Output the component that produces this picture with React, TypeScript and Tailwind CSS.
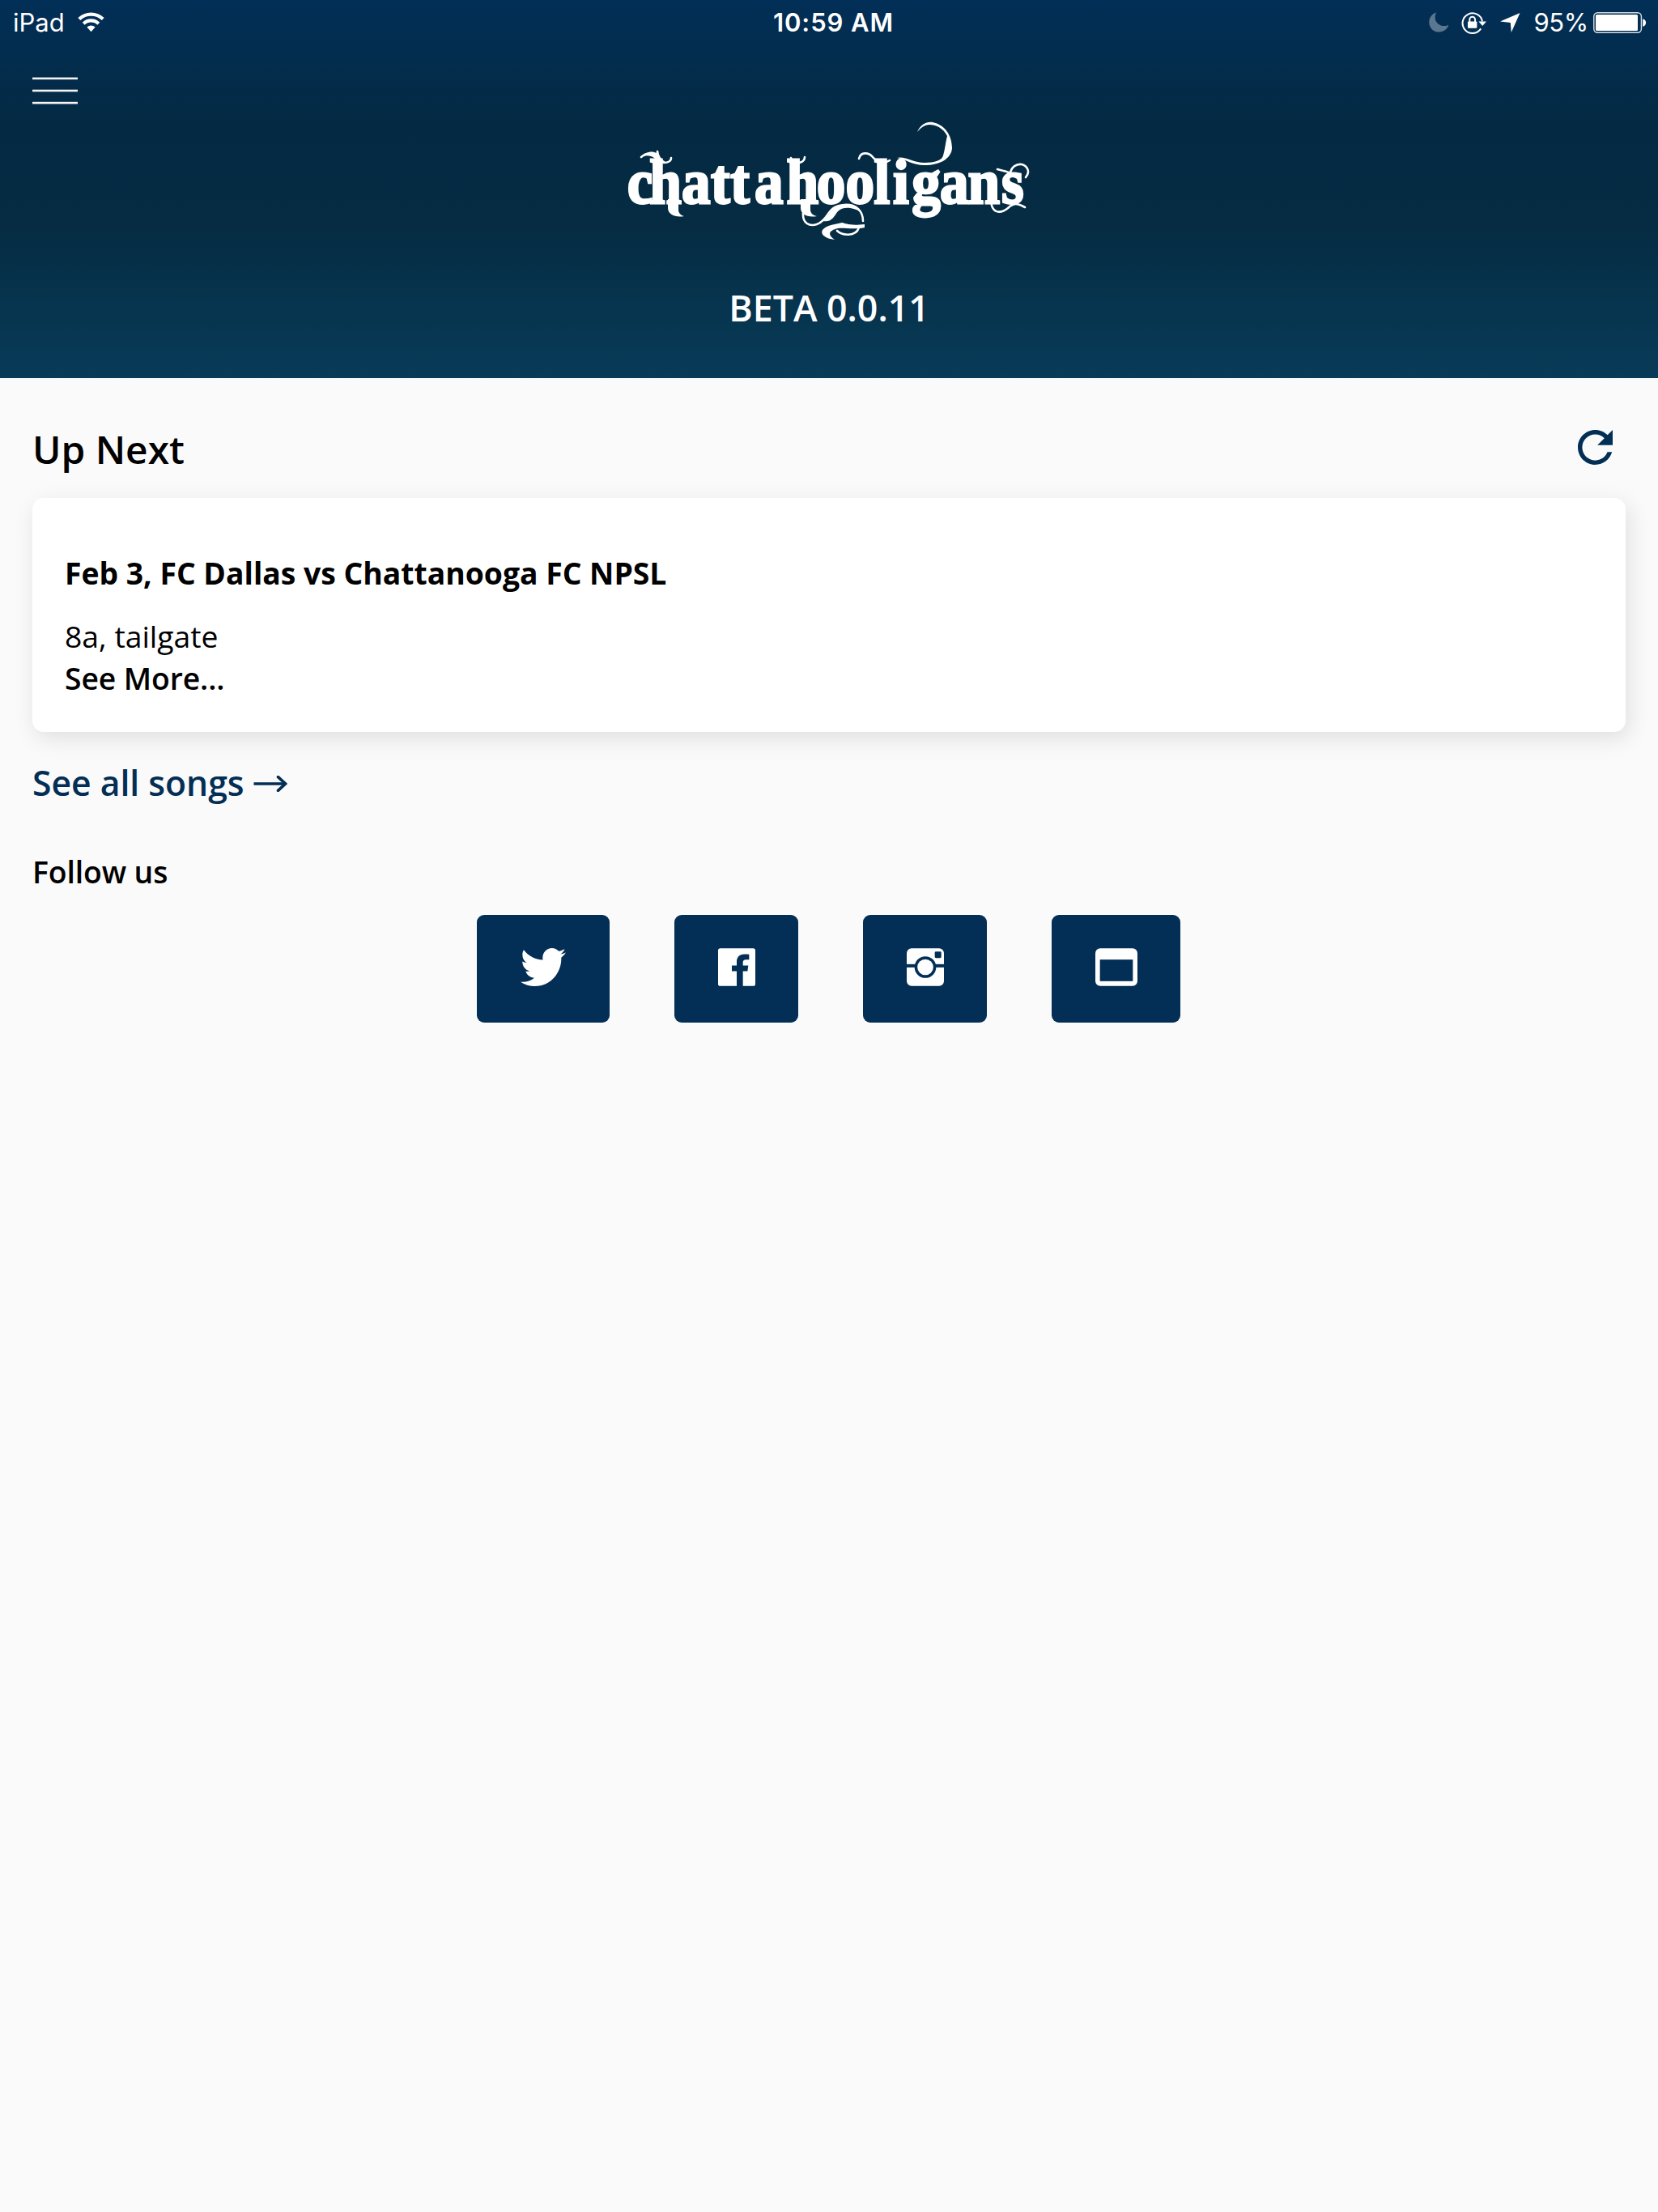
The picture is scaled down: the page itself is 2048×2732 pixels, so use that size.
import React from "react";

function WifiIcon() {
  return (
    <svg className="h-[25px] w-[33px]" viewBox="0 0 33 25" fill="none" stroke="#fff" strokeWidth="4.2">
      <path d="M1.8 8.6C10 0.6 23 0.6 31.2 8.6" />
      <path d="M7.2 14.2C12.4 9.2 20.6 9.2 25.8 14.2" />
      <path d="M11.4 18.6C14.4 15.8 18.6 15.8 21.6 18.6L16.5 24.2Z" fill="#fff" stroke="none" />
    </svg>
  );
}

function MoonIcon() {
  return (
    <svg className="h-[25px] w-[25px]" viewBox="0 0 25 25" fill="#fff" fillOpacity="0.35">
      <path d="M9.5 0.2C4 1.8 0.3 6.6 0.3 12.4C0.3 19.2 5.6 24.6 12.4 24.6C18 24.6 22.8 21 24.4 15.8C22.6 16.8 20.6 17.2 18.6 17.1C12.2 16.8 7.6 11.8 7.6 6.4C7.6 4 8.2 1.9 9.5 0.2Z" />
    </svg>
  );
}

function RotationLockIcon() {
  return (
    <svg className="h-[28px] w-[32px]" viewBox="0 0 32 28" fill="none" stroke="#fff" strokeWidth="2">
      <path d="M24.2 21.4A12.3 12.3 0 1 1 26 12.5" />
      <path d="M21.4 12.5H31L26.2 18Z" fill="#fff" stroke="none" />
      <rect x="8" y="12.6" width="11.4" height="8.2" rx="1" fill="#fff" stroke="none" />
      <path d="M10.3 13V10.2A3.4 3.4 0 0 1 17.1 10.2V13" />
    </svg>
  );
}

function LocationIcon() {
  return (
    <svg className="h-[24px] w-[25px]" viewBox="0 0 25 24" fill="#fff">
      <path d="M24.5 0L13.8 24L12.8 12L0 10.6Z" />
    </svg>
  );
}

function BatteryIcon() {
  return (
    <svg className="h-[26px] w-[66px]" viewBox="0 0 66 26">
      <rect x="0.8" y="0.8" width="58.6" height="24.4" rx="4.5" fill="none" stroke="#fff" strokeOpacity="0.85" strokeWidth="1.4" />
      <rect x="3" y="3" width="52" height="20" rx="1.5" fill="#fff" />
      <path d="M61.2 8.2C66.4 9.2 66.4 16.8 61.2 17.8Z" fill="#fff" />
    </svg>
  );
}

function Wordmark() {
  return (
    <svg className="mx-auto mt-2 block h-[170px] w-[510px]" viewBox="0 0 510 170">
      <g transform="scale(0.9 1)">
        <text
          x="6.5 37 81 121 148 181 225 266.5 306 345 371 397 435.5 474 520"
          y="111.5"
          fill="#fff"
          stroke="#fff"
          strokeWidth="2.8"
          strokeLinejoin="miter"
          fontSize="79"
          fontWeight="700"
          fontFamily="'Liberation Serif', serif"
        >
          chattahooligans
        </text>
      </g>
      <g fill="none" stroke="#fff" strokeWidth="2.6" strokeLinecap="round" strokeLinejoin="round">
        <path d="M23 54C29 49 36 49 42 53M43 47C42 54 46 60 51 61C56 61 60 59 60 55" />
        <path d="M208 55C210 59 214 62 218 61C223 60 225 57 225 54" />
        <path d="M292 56C294 47 304 48 309 54C314 60 323 63 330 58" />
        <path d="M223 123C222 136 231 140 240 137C255 132 252 114 274 113C289 112 297 121 297 133" />
        <path d="M265 145C271 151 288 153 292 141" />
        <path d="M455 108C456 123 466 125 476 117C483 110 488 111 497 116" />
        <path d="M463 69C469 71 475 71 479 74C480 66 487 62 493 63C500 65 504 72 498 79" />
      </g>
      <g fill="#fff">
        <path d="M364 23C368 14 375 10 383 11C398 14 407 27 407 43C406 56 392 64 373 64C358 64 348 56 339 55C348 52 359 61 373 61C385 61 395 58 396 52C398 46 399 36 401 28C396 18 387 14 379 14C373 14 368 18 364 23Z" />
        <path d="M23 54C28 47 37 46 42 49L44 46C45 52 47 56 53 60L47 62C41 56 34 49 23 54Z" />
        <path d="M56 106H69V119C69 123 72 126 76 127C66 129 56 125 56 117Z" />
        <path d="M220 106H232V119C232 123 235 126 240 127C229 129 220 125 220 117Z" />
        <path d="M262 156C250 155 244 149 247 144C252 138 262 137 271 135C276 136 280 139 299 137V141C285 144 275 141 266 142C257 144 251 149 262 156Z" />
        <path d="M247 133C256 127 257 114 275 112C284 112 292 115 296 123C287 116 272 114 266 121C261 127 259 135 247 133Z" />
      </g>
    </svg>
  );
}

function RefreshIcon() {
  return (
    <svg className="h-[43px] w-[43px]" viewBox="80 80 352 352" fill="#032e55">
      <path d="M256 388c-72.597 0-132-59.405-132-132 0-72.601 59.403-132 132-132 36.3 0 69.299 15.4 92.406 39.601L278 234h154V80l-51.698 51.702C348.406 99.798 304.406 80 256 80c-96.797 0-176 79.203-176 176s78.094 176 176 176c81.045 0 148.287-54.134 169.401-128H378.85c-18.745 49.561-67.138 84-122.85 84z" />
    </svg>
  );
}

function TwitterIcon() {
  return (
    <svg className="h-[47px] w-[56px]" viewBox="20 64 472 384" preserveAspectRatio="none" fill="#fff">
      <path d="M492 109.5c-17.4 7.7-36 12.9-55.6 15.3 20-12 35.4-31 42.6-53.6-18.7 11.1-39.4 19.2-61.5 23.5C399.8 75.8 374.6 64 346.8 64c-53.5 0-96.8 43.4-96.8 96.9 0 7.6.8 15 2.5 22.1-80.5-4-151.9-42.6-199.6-101.3-8.3 14.3-13.1 31-13.1 48.7 0 33.6 17.2 63.3 43.2 80.7-16-.4-31-4.8-44-12.1v1.2c0 47 33.4 86.1 77.7 95-8.1 2.2-16.7 3.4-25.5 3.4-6.2 0-12.3-.6-18.2-1.8 12.3 38.5 48.1 66.5 90.5 67.3-33.1 26-74.9 41.5-120.3 41.5-7.8 0-15.5-.5-23.1-1.4C62.8 432 113.7 448 168.3 448 346.6 448 444 300.3 444 172.2c0-4.2-.1-8.4-.3-12.5C462.6 146 479 129 492 109.5z" />
    </svg>
  );
}

function FacebookIcon() {
  return (
    <svg className="h-[47px] w-[46px]" viewBox="0 0 138 140" fill="#fff">
      <path d="M8 0H130A8 8 0 0 1 138 8V132A8 8 0 0 1 130 140H92V85H109L112 64H92V53C92 46 95 42 103 42H115V23C109 22 103 22 97 22C79 22 69 33 69 50V64H51V85H69V140H8A8 8 0 0 1 0 132V8A8 8 0 0 1 8 0Z" />
    </svg>
  );
}

function InstagramIcon() {
  return (
    <svg className="h-[47px] w-[46px]" viewBox="0 0 138 140">
      <rect width="138" height="140" rx="18" fill="#fff" />
      <rect y="59" width="138" height="12" fill="#032e55" />
      <circle cx="69" cy="70" r="40" fill="#032e55" />
      <circle cx="69" cy="70" r="29.5" fill="#fff" />
      <rect x="104" y="12" width="24" height="24" rx="4" fill="#032e55" />
    </svg>
  );
}

function BrowserIcon() {
  return (
    <svg className="h-[47px] w-[52px]" viewBox="0 0 156 140">
      <rect width="156" height="140" rx="18" fill="#fff" />
      <rect x="17" y="42" width="122" height="80" fill="#032e55" />
    </svg>
  );
}

export default function App() {
  return (
    <div className="min-h-[2732px] w-full bg-[#fafafa] text-black [font-family:'Open_Sans',sans-serif]">
      <header className="h-[467px] bg-[linear-gradient(180deg,#022f57_0%,#042a43_33%,#052c43_60%,#083b58_100%)] text-white">
        <div className="grid h-[54px] grid-cols-3 items-center text-[31px] leading-[54px] [font-family:Inter,sans-serif]">
          <div className="flex items-center gap-[16px] pl-4">
            <span className="pt-px">iPad</span>
            <WifiIcon />
          </div>
          <div className="pt-px pl-[11px] text-center font-semibold tracking-[0.9px]">10:59 AM</div>
          <div className="flex items-center justify-end pr-[14px]">
            <MoonIcon />
            <span className="w-[15px]" />
            <RotationLockIcon />
            <span className="w-4" />
            <LocationIcon />
            <span className="w-[16px]" />
            <span className="pt-px tracking-[-0.3px]">95%</span>
            <span className="w-[6px]" />
            <BatteryIcon />
          </div>
        </div>
        <svg className="mt-[38px] ml-10 block h-10 w-14" viewBox="0 0 56 40" fill="#fff" fillOpacity="0.95">
          <rect y="3.6" width="56" height="2.6" />
          <rect y="18.7" width="56" height="2.6" />
          <rect y="33.8" width="56" height="2.6" />
        </svg>
        <Wordmark />
        <div className="mt-[39px] text-center text-[44.7px] leading-[62px] font-semibold">BETA 0.0.11</div>
      </header>

      <main className="px-10 pt-[53px]">
        <div className="flex h-[67px] items-start justify-between pr-4">
          <h2 className="pt-px text-[47.8px] leading-[67px] font-semibold">Up Next</h2>
          <div className="mt-[11px]">
            <RefreshIcon />
          </div>
        </div>

        <section className="mt-7 h-[289px] rounded-[14px] bg-white px-10 pt-[67px] text-[37.3px] leading-[52px] shadow-[4px_8px_28px_rgba(0,0,0,0.11)]">
          <h3 className="font-bold">Feb 3, FC Dallas vs Chattanooga FC NPSL</h3>
          <p className="mt-[26px]">8a, tailgate</p>
          <p className="font-semibold tracking-[-0.1px]">See More...</p>
        </section>

        <a className="mt-[33px] flex h-[60px] items-center gap-[11px] text-[42.67px] leading-[60px] font-semibold text-[#032e55]">
          <span>See all songs</span>
          <svg className="mt-px h-5 w-[42px]" viewBox="0 0 42 20" fill="none" stroke="#032e55" strokeWidth="3.6">
            <path d="M0.5 10H39" />
            <path d="M30.5 1.6L39.5 10L30.5 18.4" strokeLinecap="round" />
          </svg>
        </a>

        <h4 className="mt-[54px] text-[37.3px] leading-[52px] font-semibold tracking-[-0.1px]">Follow us</h4>

        <div className="mt-[27px] flex justify-center gap-20 pr-px [&>button]:flex [&>button]:h-[133px] [&>button]:justify-center [&>button]:rounded-[9px] [&>button]:bg-[#032e55] [&>button]:pt-[41px]">
          <button className="w-[164px]">
            <TwitterIcon />
          </button>
          <button className="w-[153px]">
            <FacebookIcon />
          </button>
          <button className="w-[153px]">
            <InstagramIcon />
          </button>
          <button className="w-[159px]">
            <BrowserIcon />
          </button>
        </div>
      </main>
    </div>
  );
}
